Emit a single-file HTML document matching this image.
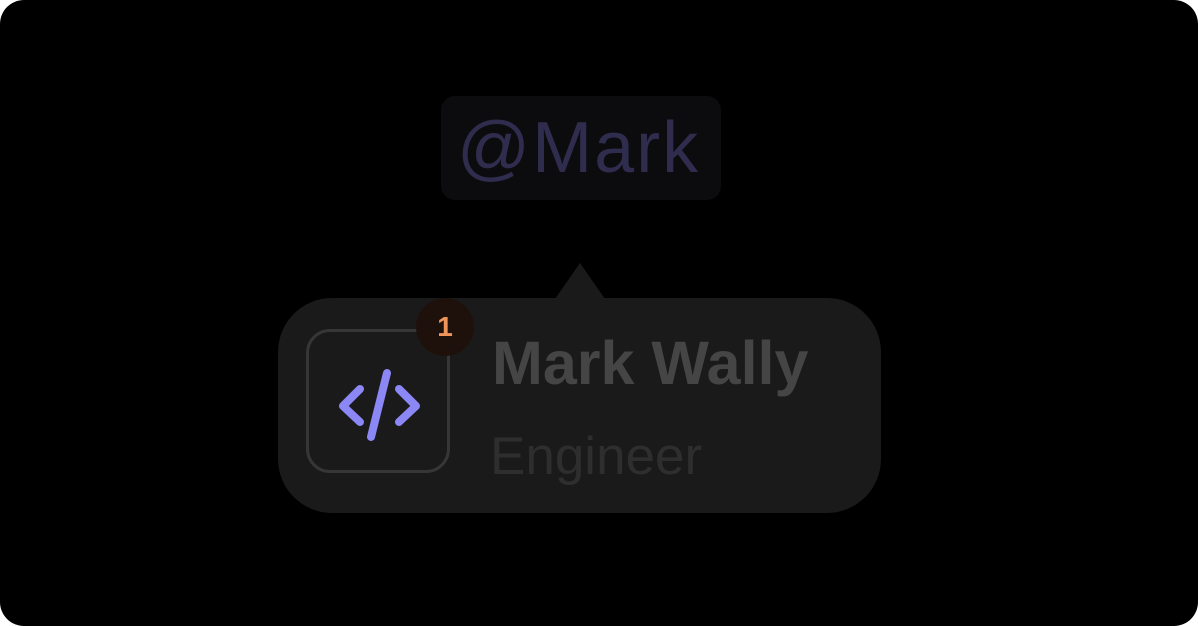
<!DOCTYPE html>
<html><head><style>
html,body{margin:0;padding:0;background:#fff;}
.root{position:relative;width:1198px;height:626px;background:#000;border-radius:24px;overflow:hidden;font-family:"Liberation Sans",sans-serif;}
.tag{position:absolute;left:441px;top:96px;width:280px;height:104px;background:#0c0c0f;border-radius:14px;}
.tag span{position:absolute;left:16px;top:12px;font-size:72px;color:#2f2c4e;line-height:80px;letter-spacing:2px;white-space:nowrap;}
.tri{position:absolute;left:555px;top:263px;width:0;height:0;border-left:25px solid transparent;border-right:25px solid transparent;border-bottom:36px solid #1a1a1a;}
.card{position:absolute;left:278px;top:298px;width:603px;height:215px;background:#1a1a1a;border-radius:54px;}
.box{position:absolute;left:306px;top:329px;width:138px;height:138px;border:3px solid #363636;border-radius:24px;}
.badge{position:absolute;left:416px;top:298px;width:58px;height:58px;border-radius:50%;background:#1e110c;color:#f0955a;font-size:28px;font-weight:bold;text-align:center;line-height:58px;}
.name{position:absolute;left:492px;top:328px;font-size:61px;font-weight:bold;color:#454545;line-height:70px;white-space:nowrap;}
.role{position:absolute;left:490px;top:426px;font-size:53px;color:#2e2e2e;line-height:62px;white-space:nowrap;}
</style></head><body>
<div class="root">
<div class="tag"><span>@Mark</span></div>
<div class="tri"></div>
<div class="card"></div>
<div class="box"></div>
<svg style="position:absolute;left:0;top:0" width="1198" height="626">
<g fill="none" stroke="#8b87f5" stroke-width="8" stroke-linecap="round" stroke-linejoin="round">
<path d="M360 389 L343 406 L360 422"/>
<path d="M399 389 L416 406 L399 422"/>
<path d="M387 373 L371 437"/>
</g></svg>
<div class="badge">1</div>
<div class="name">Mark Wally</div>
<div class="role">Engineer</div>
</div>
</body></html>
